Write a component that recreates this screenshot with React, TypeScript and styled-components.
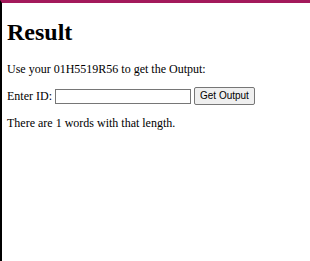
import styled, { createGlobalStyle } from "styled-components";

const GlobalStyle = createGlobalStyle`
  html, body {
    margin: 0;
    padding: 0;
    background: #fff;
  }
  body {
    font-family: "Liberation Serif", "Times New Roman", serif;
    color: #000;
  }
`;

const Page = styled.div`
  min-height: 100vh;
  box-sizing: border-box;
  border-top: 3px solid #a3195b;
  border-left: 2px solid #000;
  padding: 0 5px;
  font-size: 12px;
`;

const Title = styled.h1`
  font-size: 24px;
  font-weight: bold;
  margin: 16px 0;
`;

const Text = styled.p`
  margin: 10px 0;
`;

const Row = styled.div`
  display: flex;
  align-items: center;
  gap: 3px;
  margin: 10px 0 11px;
`;

const IdInput = styled.input`
  width: 130px;
  height: 11px;
  border: 1px solid #767676;
  padding: 1px 2px;
  font-size: 10px;
`;

const Button = styled.button`
  font-family: "Liberation Sans", Arial, sans-serif;
  font-size: 10px;
  line-height: 12px;
  padding: 2px 5px;
  border: 1px solid #767676;
  background: #efefef;
  border-radius: 2px;
  color: #000;
`;

function App() {
  return (
    <Page>
      <GlobalStyle />
      <Title>Result</Title>
      <Text>Use your 01H5519R56 to get the Output:</Text>
      <Row>
        <label>Enter ID:</label>
        <IdInput type="text" />
        <Button>Get Output</Button>
      </Row>
      <Text>There are 1 words with that length.</Text>
    </Page>
  );
}

export default App;
